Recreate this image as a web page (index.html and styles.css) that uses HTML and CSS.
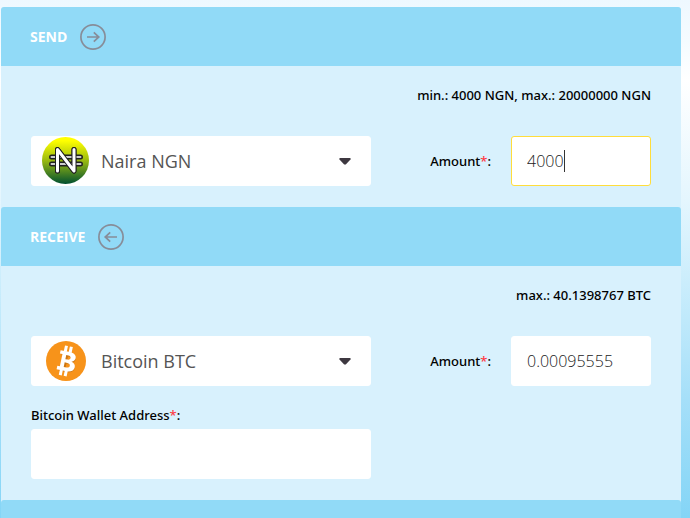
FILE: index.html
```html
<!DOCTYPE html>
<html lang="en">
<head>
<meta charset="utf-8">
<meta name="viewport" content="width=device-width, initial-scale=1">
<title>Exchange</title>
<link rel="stylesheet" href="styles.css">
</head>
<body>
<form class="exchange">
  <section>
    <header class="bar">
      <h2>Send</h2>
      <svg class="arrow" viewBox="0 0 26 26" aria-hidden="true"><circle cx="13" cy="13" r="12.1"/><path d="M7 13h12M13.8 8.4l5 4.6-5 4.6"/></svg>
    </header>
    <div class="panel">
      <p class="limits">min.: 4000 NGN, max.: 20000000 NGN</p>
      <div class="row">
        <div class="currency">
          <select aria-label="Send currency"><option>Naira NGN</option></select>
          <svg class="coin" viewBox="0 0 48 48" aria-hidden="true">
            <defs><linearGradient id="naira" x1="0" y1="0" x2="0" y2="1"><stop offset="0.08" stop-color="#ffff00"/><stop offset="0.5" stop-color="#9aba10"/><stop offset="1" stop-color="#005030"/></linearGradient></defs>
            <circle cx="23.5" cy="23.5" r="23.5" fill="url(#naira)"/>
            <g fill="none" stroke-linecap="round" stroke-linejoin="round">
              <path d="M9.5 20h29M9.5 27h29M15.500 34V12.500L32 34V12.500" stroke="#202020" stroke-width="5"/>
              <path d="M9.500 20h29M9.500 27h29" stroke="#ccc" stroke-width="2"/>
              <path d="M15.500 34V12.500L32 34V12.500" stroke="#202020" stroke-width="5"/>
              <path d="M15.500 34V12.500L32 34V12.500" stroke="#fff" stroke-width="3"/>
            </g>
          </svg>
          <svg class="caret" viewBox="0 0 12 7" aria-hidden="true"><path d="M.5 0h11v1.5L6.8 6.6H5.2L.5 1.5z"/></svg>
        </div>
        <label for="send-amount">Amount<span class="required">*</span>:</label>
        <div class="amount editing"><input id="send-amount" type="text" value="4000"></div>
      </div>
    </div>
  </section>
  <section>
    <header class="bar">
      <h2>Receive</h2>
      <svg class="arrow" viewBox="0 0 26 26" aria-hidden="true"><circle cx="13" cy="13" r="12.1"/><path d="M19 13H7M12.2 8.4l-5 4.6 5 4.6"/></svg>
    </header>
    <div class="panel">
      <p class="limits">max.: 40.1398767 BTC</p>
      <div class="row">
        <div class="currency">
          <select aria-label="Receive currency"><option>Bitcoin BTC</option></select>
          <svg class="coin" viewBox="0 0 48 48" aria-hidden="true">
            <circle cx="24" cy="24" r="20" fill="#f7931a"/>
            <g transform="rotate(12 24 24)">
              <path d="M17.5 15h8c8 0 8.3 7.3 3.2 8.5 6.3 1 6 10-2.7 10h-8.500v-3.200h2.600V18.200h-2.600zM24 18.200v4.100h1.500c3.400 0 3.400-4.100 0-4.100zM24 25.400v4.900h2c4 0 4-4.900 0-4.900z" fill="#ca7514" fill-rule="evenodd" transform="translate(1 1)"/>
              <path d="M16.500 14.500h9.500c8.500 0 8.500 7.700 3.500 9 6.500 1 6 10.500-3 10.500h-10v-3.500h2.600V18h-2.600zM23 18.200v4.100h2.200c3.600 0 3.600-4.100 0-4.100zM23 25.600v4.700h2.600c4.200 0 4.200-4.700 0-4.700z" fill="#fff" fill-rule="evenodd"/>
              <path d="M21.300 9v6M26.300 9v6M21.300 33v6M26.300 33v6" stroke="#fff" stroke-width="3"/>
            </g>
          </svg>
          <svg class="caret" viewBox="0 0 12 7" aria-hidden="true"><path d="M.5 0h11v1.500L6.800 6.600H5.200L.5 1.500z"/></svg>
        </div>
        <label for="receive-amount">Amount<span class="required">*</span>:</label>
        <div class="amount"><input id="receive-amount" type="text" value="0.00095555"></div>
      </div>
      <div class="wallet">
        <label for="wallet">Bitcoin Wallet Address<span class="required">*</span>:</label>
        <input id="wallet" type="text">
      </div>
    </div>
  </section>
  <section><header class="bar bar-closed"></header></section>
</form>
</body>
</html>
```
FILE: styles.css
```css
* { box-sizing: border-box; }
body {
  margin: 0;
  min-height: 100vh;
  padding: 7px 9px 0 1px;
  background: linear-gradient(#eef8ff 0, #f4fbff 40px, #ffffff 80px, #e4f6fe 200px, #bfe9fb 320px, #a5dff9 400px, #84d5f6 518px);
  font: 500 13px/18px "Noto Sans", "Open Sans", sans-serif;
  color: #000;
}
.exchange {
  background: #d8f1fd;
  border-radius: 4px;
}
.bar {
  display: flex;
  align-items: center;
  gap: 13px;
  min-height: 59px;
  padding: 0 29px;
  background: #91daf7;
  border-radius: 3px 3px 0 0;
}
.bar-closed { min-height: 18px; }
h2 {
  margin: 0;
  font: 700 14px/18px "Open Sans", sans-serif;
  text-transform: uppercase;
  color: #fff;
}
.arrow {
  width: 26px;
  height: 26px;
  fill: none;
  stroke: #878d99;
  stroke-width: 1.7;
}
.panel { padding: 20px 30px 21px; }
.limits {
  margin: 0 0 32px;
  text-align: right;
}
.row {
  display: grid;
  grid-template-columns: minmax(0, 340fr) 120px minmax(0, 140fr);
  column-gap: 10px;
  align-items: center;
}
.row > label {
  text-align: right;
  padding-right: 10px;
}
.required { color: #ff3b45; }
.currency, .amount { position: relative; }
select, input {
  display: block;
  width: 100%;
  height: 50px;
  border: 1px solid #fff;
  border-radius: 3px;
  background: #fff;
  color: #555;
  font: 400 18px/24px "Open Sans", sans-serif;
  outline: none;
  appearance: none;
}
select { padding: 0 40px 0 69px; }
input {
  padding: 0 15px;
  font-size: 16px;
  font-weight: 300;
  color: #222;
}
.coin, .caret { position: absolute; pointer-events: none; }
.coin { left: 11px; top: 1px; width: 48px; height: 48px; }
.caret { right: 20px; top: 22px; width: 12px; height: 7px; fill: #3d3840; }
.editing input { border-color: #ffdd3c; }
.editing::after {
  content: "";
  position: absolute;
  left: 53px;
  top: 14px;
  width: 1px;
  height: 22px;
  background: #333;
}
.wallet {
  display: grid;
  grid-template-columns: minmax(0, 340fr) minmax(0, 280fr);
  row-gap: 5px;
  margin-top: 20px;
}
.wallet label { grid-column: 1 / -1; }
```
